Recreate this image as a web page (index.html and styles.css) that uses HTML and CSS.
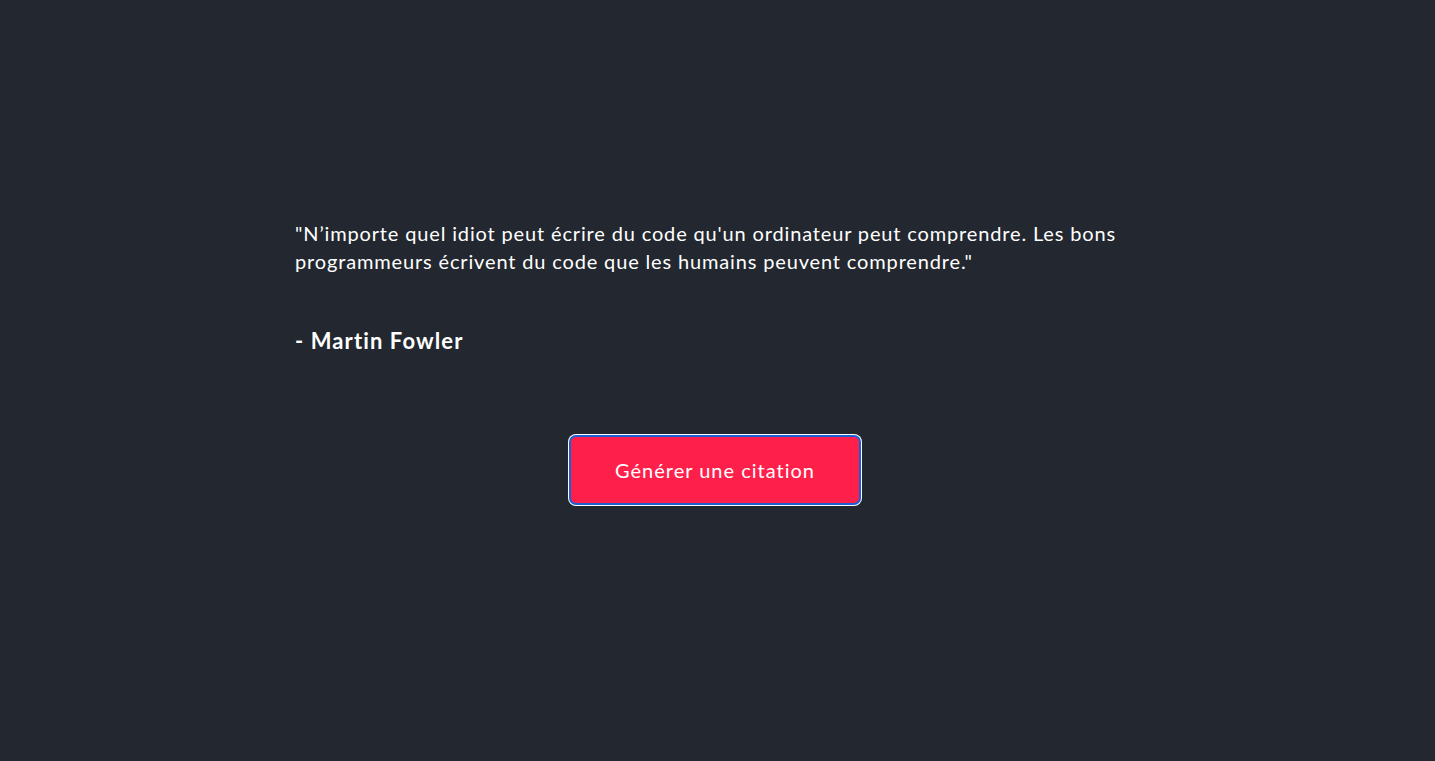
FILE: index.html
```html
<!DOCTYPE html>
<html lang="fr">
<head>
<meta charset="utf-8">
<title>Citation</title>
<link rel="stylesheet" href="styles.css">
</head>
<body>
<main class="wrap">
  <p class="quote">"N’importe quel idiot peut écrire du code qu'un ordinateur peut comprendre. Les bons programmeurs écrivent du code que les humains peuvent comprendre."</p>
  <p class="author">- Martin Fowler</p>
  <div class="actions">
    <button class="btn">Générer une citation</button>
  </div>
</main>
</body>
</html>
```
FILE: styles.css
```css
html, body {
  margin: 0;
  padding: 0;
  background: #23272f;
  height: 100%;
}
body {
  font-family: "Lato", "Noto Sans", sans-serif;
  color: #ffffff;
}
.wrap {
  width: 845px;
  margin: 0 auto;
  padding-top: 219px;
}
.quote {
  margin: 0;
  font-size: 20px;
  line-height: 28px;
  letter-spacing: 0.85px;
}
.author {
  margin: 51px 0 0;
  font-size: 22px;
  line-height: 30px;
  font-weight: 700;
  letter-spacing: 1.1px;
}
.actions {
  display: flex;
  justify-content: center;
  margin-top: 79px;
  padding-right: 5px;
}
.btn {
  width: 292px;
  height: 70px;
  background: #ff1f4b;
  color: #ffffff;
  border: 2px solid #1c5fd4;
  border-radius: 7px;
  box-shadow: 0 0 0 1px #ffffff;
  font-family: inherit;
  font-size: 20px;
  letter-spacing: 1px;
  cursor: pointer;
}
```
